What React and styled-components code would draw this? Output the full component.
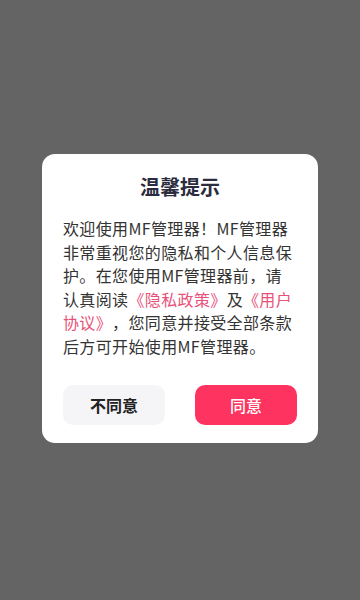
import React from 'react'
import styled, { createGlobalStyle } from 'styled-components'

const Global = createGlobalStyle`
  html, body {
    margin: 0;
    padding: 0;
    background: #646464;
  }
  body {
    font-family: "Noto Sans CJK SC", "Noto Sans", sans-serif;
  }
`

const Screen = styled.div`
  width: 360px;
  height: 600px;
  background: #646464;
  display: flex;
  flex-direction: column;
  align-items: center;
  padding-top: 154px;
  box-sizing: border-box;
`

const Dialog = styled.div`
  width: 276px;
  box-sizing: border-box;
  padding: 19px 21px 18px;
  background: #fff;
  border-radius: 13px;
`

const Title = styled.h2`
  margin: 0;
  font-size: 20px;
  line-height: 28px;
  font-weight: 700;
  color: #2c2c40;
  text-align: center;
`

const Body = styled.p`
  margin: 16px 0 0;
  font-size: 16px;
  line-height: 23.6px;
  letter-spacing: 0.36px;
  color: #333;
  text-align: left;
  text-spacing-trim: space-all;
`

const Link = styled.span`
  color: #e8527a;
`

const Actions = styled.div`
  display: flex;
  justify-content: space-between;
  margin-top: 26px;
`

const Button = styled.button`
  width: 102px;
  height: 40px;
  padding: 0;
  border: none;
  border-radius: 10px;
  font-family: inherit;
  font-size: 16px;
  font-weight: ${p => (p.$primary ? 500 : 700)};
  background: ${p => (p.$primary ? '#fe3360' : '#f5f5f7')};
  color: ${p => (p.$primary ? '#fff' : '#222')};
  cursor: pointer;
`

export default function App() {
  return (
    <>
      <Global />
      <Screen>
        <Dialog>
          <Title>温馨提示</Title>
          <Body>
            欢迎使用MF管理器！MF管理器非常重视您的隐私和个人信息保护。在您使用MF管理器前，请认真阅读
            <Link>《隐私政策》</Link>及<Link>《用户协议》</Link>，您同意并接受全部条款后方可开始使用MF管理器。
          </Body>
          <Actions>
            <Button>不同意</Button>
            <Button $primary>同意</Button>
          </Actions>
        </Dialog>
      </Screen>
    </>
  )
}
